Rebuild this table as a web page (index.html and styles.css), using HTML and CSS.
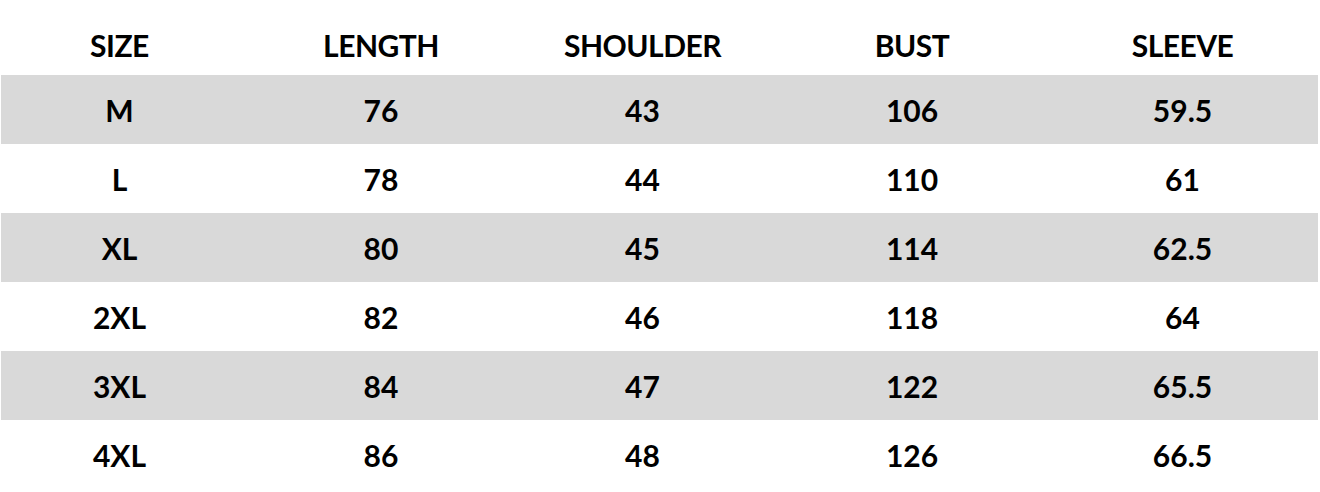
FILE: index.html
```html
<!DOCTYPE html>
<html lang="en">
<head>
<meta charset="utf-8">
<title>Size Chart</title>
<link rel="stylesheet" href="styles.css">
</head>
<body>
<div class="chart">
  <div class="row head">
    <div class="cell">SIZE</div>
    <div class="cell">LENGTH</div>
    <div class="cell">SHOULDER</div>
    <div class="cell">BUST</div>
    <div class="cell">SLEEVE</div>
  </div>
  <div class="row shaded">
    <div class="cell">M</div><div class="cell">76</div><div class="cell">43</div><div class="cell">106</div><div class="cell">59.5</div>
  </div>
  <div class="row">
    <div class="cell">L</div><div class="cell">78</div><div class="cell">44</div><div class="cell">110</div><div class="cell">61</div>
  </div>
  <div class="row shaded">
    <div class="cell">XL</div><div class="cell">80</div><div class="cell">45</div><div class="cell">114</div><div class="cell">62.5</div>
  </div>
  <div class="row">
    <div class="cell">2XL</div><div class="cell">82</div><div class="cell">46</div><div class="cell">118</div><div class="cell">64</div>
  </div>
  <div class="row shaded">
    <div class="cell">3XL</div><div class="cell">84</div><div class="cell">47</div><div class="cell">122</div><div class="cell">65.5</div>
  </div>
  <div class="row">
    <div class="cell">4XL</div><div class="cell">86</div><div class="cell">48</div><div class="cell">126</div><div class="cell">66.5</div>
  </div>
</div>
</body>
</html>
```
FILE: styles.css
```css
html, body {
  margin: 0;
  padding: 0;
  background: #ffffff;
}
.chart {
  margin-left: 1px;
  width: 1317px;
  font-family: Lato, "Open Sans", "Liberation Sans", sans-serif;
  font-weight: 700;
  font-size: 30px;
  color: #000000;
}
.row {
  display: grid;
  grid-template-columns: 237px 286px 237px 302px 255px;
  height: 69px;
  line-height: 69px;
}
.row .cell {
  text-align: center;
  padding-top: 1px;
}
.row .cell:last-child {
  padding-right: 16px;
}
.row.head {
  height: 75px;
  line-height: 59px;
  letter-spacing: -0.5px;
}
.row.head .cell {
  padding-top: 16px;
}
.row.shaded {
  background: #d9d9d9;
}
```
